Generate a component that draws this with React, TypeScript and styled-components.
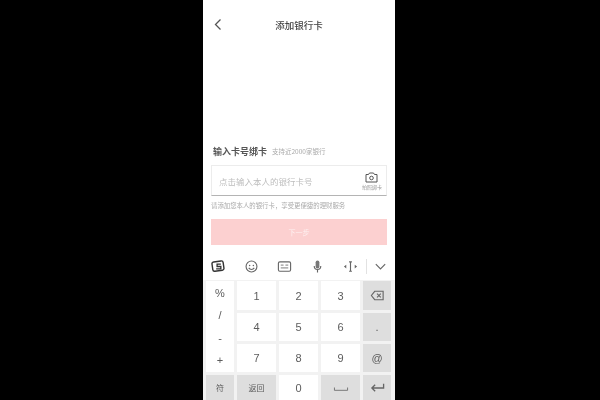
import React from "react";
import styled, { createGlobalStyle } from "styled-components";

const cjk = `"Noto Sans CJK SC", "Liberation Sans", sans-serif`;

const GlobalStyle = createGlobalStyle`
  html, body {
    margin: 0;
    height: 100%;
    background: #000;
    font-family: ${cjk};
  }
`;

const Page = styled.div`
  width: 600px;
  height: 400px;
  overflow: hidden;
  display: flex;
  justify-content: center;
  background: #000;
`;

const Phone = styled.main`
  width: 192px;
  height: 400px;
  margin-right: 2px;
  display: flex;
  flex-direction: column;
  background: #fff;
  overflow: hidden;
  filter: blur(0.7px);
`;

const NavBar = styled.header`
  height: 15px;
  margin-top: 17px;
  padding: 0 10px;
  display: flex;
  align-items: center;
`;

const NavTitle = styled.h1`
  flex: 1;
  margin: 0;
  padding-right: 10px;
  text-align: center;
  font-size: 9.5px;
  font-weight: 500;
  color: #444;
`;

const BackIcon = styled.svg`
  width: 10px;
  height: 13px;
  flex: none;
  margin-top: -1px;
`;

const Form = styled.section`
  margin-top: 112px;
  padding: 0 8px;
  display: flex;
  flex-direction: column;
`;

const LabelRow = styled.div`
  height: 14px;
  padding-left: 2px;
  display: flex;
  align-items: center;
  gap: 5px;
`;

const Label = styled.span`
  font-size: 9px;
  font-weight: 700;
  color: #555;
`;

const Sub = styled.span`
  font-size: 6.5px;
  color: #aaa;
`;

const CardInput = styled.div`
  height: 31px;
  margin-top: 7px;
  box-sizing: border-box;
  padding: 0 4px 0 7px;
  display: flex;
  align-items: center;
  justify-content: space-between;
  background: #fff;
  border: 1px solid #ececec;
  border-bottom: 1.5px solid #b4b4b4;
`;

const Placeholder = styled.span`
  font-size: 8.5px;
  color: #bdbdbd;
`;

const Scan = styled.div`
  display: flex;
  flex-direction: column;
  align-items: center;
  gap: 1px;
  font-size: 5px;
  line-height: 6px;
  color: #999;
`;

const Hint = styled.p`
  margin: 5px 0 0;
  font-size: 6.4px;
  line-height: 9px;
  color: #aaa;
  white-space: nowrap;
`;

const NextButton = styled.button`
  height: 26px;
  margin-top: 9px;
  border: 0;
  padding: 0;
  background: #fcd0d0;
  color: #fdf0f0;
  font-family: ${cjk};
  font-size: 7px;
`;

const Toolbar = styled.div`
  height: 27px;
  margin-top: 8px;
  padding: 0 7px 0 8px;
  display: flex;
  align-items: center;
  justify-content: space-between;
  background: #fff;
`;

const ToolGroup = styled.div`
  display: flex;
  align-items: center;
  gap: 18px;
`;

const CollapseGroup = styled.div`
  display: flex;
  align-items: center;
  gap: 6px;
`;

const ToolIcon = styled.svg`
  width: 15px;
  height: 15px;
  flex: none;
`;

const ToolDivider = styled.span`
  width: 1px;
  height: 15px;
  background: #e2e2e2;
`;

const Keyboard = styled.div`
  flex: 1;
  padding: 1px 3px 0;
  display: grid;
  grid-template-columns: 28px 39px 39px 39px 28px;
  grid-template-rows: 29px 28px 28px 25px;
  gap: 3px;
  background: #f2f2f2;
`;

const Key = styled.div<{ $gray?: boolean }>`
  display: flex;
  align-items: center;
  justify-content: center;
  background: ${(p) => (p.$gray ? "#dedede" : "#fff")};
  color: #5c5c5c;
  font-size: 11px;
  font-family: "Liberation Sans", ${cjk};
`;

const SymbolColumn = styled.div`
  grid-column: 1;
  grid-row: 1 / span 3;
  padding: 6px 0;
  display: flex;
  flex-direction: column;
  align-items: center;
  justify-content: space-between;
  background: #fff;
  color: #5c5c5c;
  font-size: 11px;
  font-family: "Liberation Sans", sans-serif;
`;

const SmallKey = styled(Key)`
  font-size: 8px;
  font-family: ${cjk};
`;

const digits = ["1", "2", "3", "BACK", "4", "5", "6", ".", "7", "8", "9", "@"];

const stroke = { fill: "none", stroke: "#666", strokeWidth: 1.2 };

const BackspaceIcon = () => (
  <ToolIcon viewBox="0 0 16 16">
    <path d="M5 3.5h9v9H5L1.5 8z" {...stroke} />
    <path d="M7.5 6l4 4M11.5 6l-4 4" {...stroke} />
  </ToolIcon>
);

const EnterIcon = () => (
  <ToolIcon viewBox="0 0 16 16">
    <path d="M14.5 4v4.5H2M5.5 5L2 8.5 5.5 12" {...stroke} strokeWidth={1.4} />
  </ToolIcon>
);

const SpaceIcon = () => (
  <ToolIcon viewBox="0 0 16 16" style={{ width: 18 }}>
    <path d="M1 8v3h14V8" {...stroke} strokeWidth={0.9} />
  </ToolIcon>
);

export default function App() {
  return (
    <Page>
      <GlobalStyle />
      <Phone>
        <NavBar>
          <BackIcon viewBox="0 0 10 13">
            <path d="M7.5 1.5L2.5 6.5l5 5" fill="none" stroke="#555" strokeWidth="1.3" />
          </BackIcon>
          <NavTitle>添加银行卡</NavTitle>
        </NavBar>

        <Form>
          <LabelRow>
            <Label>输入卡号绑卡</Label>
            <Sub>支持近2000家银行</Sub>
          </LabelRow>
          <CardInput>
            <Placeholder>点击输入本人的银行卡号</Placeholder>
            <Scan>
              <svg width="13" height="11" viewBox="0 0 13 11">
                <path d="M1 2.5h2.5L4.5 1h4l1 1.5H12v7.5H1z" fill="none" stroke="#555" strokeWidth="1" />
                <circle cx="6.5" cy="6" r="1.8" fill="none" stroke="#555" strokeWidth="1" />
              </svg>
              拍照绑卡
            </Scan>
          </CardInput>
          <Hint>请添加您本人的银行卡，享受更便捷的理财服务</Hint>
          <NextButton>下一步</NextButton>
        </Form>

        <Toolbar>
          <ToolGroup>
            <ToolIcon viewBox="0 0 16 16">
              <rect x="1.5" y="2.5" width="12" height="10" rx="2" transform="rotate(-8 8 8)" fill="none" stroke="#333" strokeWidth="1.5" />
              <path d="M10.5 5.5H6.5v2.5h4v2.5H5.5" fill="none" stroke="#333" strokeWidth="1.4" />
            </ToolIcon>
            <ToolIcon viewBox="0 0 16 16">
              <circle cx="8" cy="8" r="5.8" {...stroke} />
              <circle cx="6" cy="6.8" r="0.8" fill="#666" />
              <circle cx="10" cy="6.8" r="0.8" fill="#666" />
              <path d="M5 9.5c1.5 2.2 4.5 2.2 6 0" {...stroke} />
            </ToolIcon>
            <ToolIcon viewBox="0 0 16 16">
              <rect x="1.5" y="3" width="13" height="10" rx="1.5" {...stroke} />
              <path d="M4 6.5h3M4 9.5h8M9 6.5h3" {...stroke} strokeWidth={0.9} />
            </ToolIcon>
            <ToolIcon viewBox="0 0 16 16">
              <rect x="6" y="1.5" width="4" height="8.5" rx="2" fill="#777" />
              <path d="M4.5 7.5c0 5 7 5 7 0M8 11.5v3" {...stroke} />
            </ToolIcon>
            <ToolIcon viewBox="0 0 16 16">
              <path d="M6.5 3h3M6.5 13h3M8 3v10" {...stroke} />
              <path d="M1 8l2.5-2v4zM15 8l-2.5-2v4z" fill="#666" />
            </ToolIcon>
          </ToolGroup>
          <CollapseGroup>
            <ToolDivider />
            <ToolIcon viewBox="0 0 16 16">
              <path d="M3 5.5l5 5 5-5" {...stroke} />
            </ToolIcon>
          </CollapseGroup>
        </Toolbar>

        <Keyboard>
          <SymbolColumn>
            <span>%</span>
            <span>/</span>
            <span>-</span>
            <span>+</span>
          </SymbolColumn>
          {digits.map((d, i) => {
            const side = (i + 1) % 4 === 0;
            return (
              <Key key={d} $gray={side} style={{ gridColumn: (i % 4) + 2 }}>
                {d === "BACK" ? <BackspaceIcon /> : d}
              </Key>
            );
          })}
          <SmallKey $gray>符</SmallKey>
          <SmallKey $gray>返回</SmallKey>
          <Key>0</Key>
          <Key $gray><SpaceIcon /></Key>
          <Key $gray><EnterIcon /></Key>
        </Keyboard>
      </Phone>
    </Page>
  );
}
